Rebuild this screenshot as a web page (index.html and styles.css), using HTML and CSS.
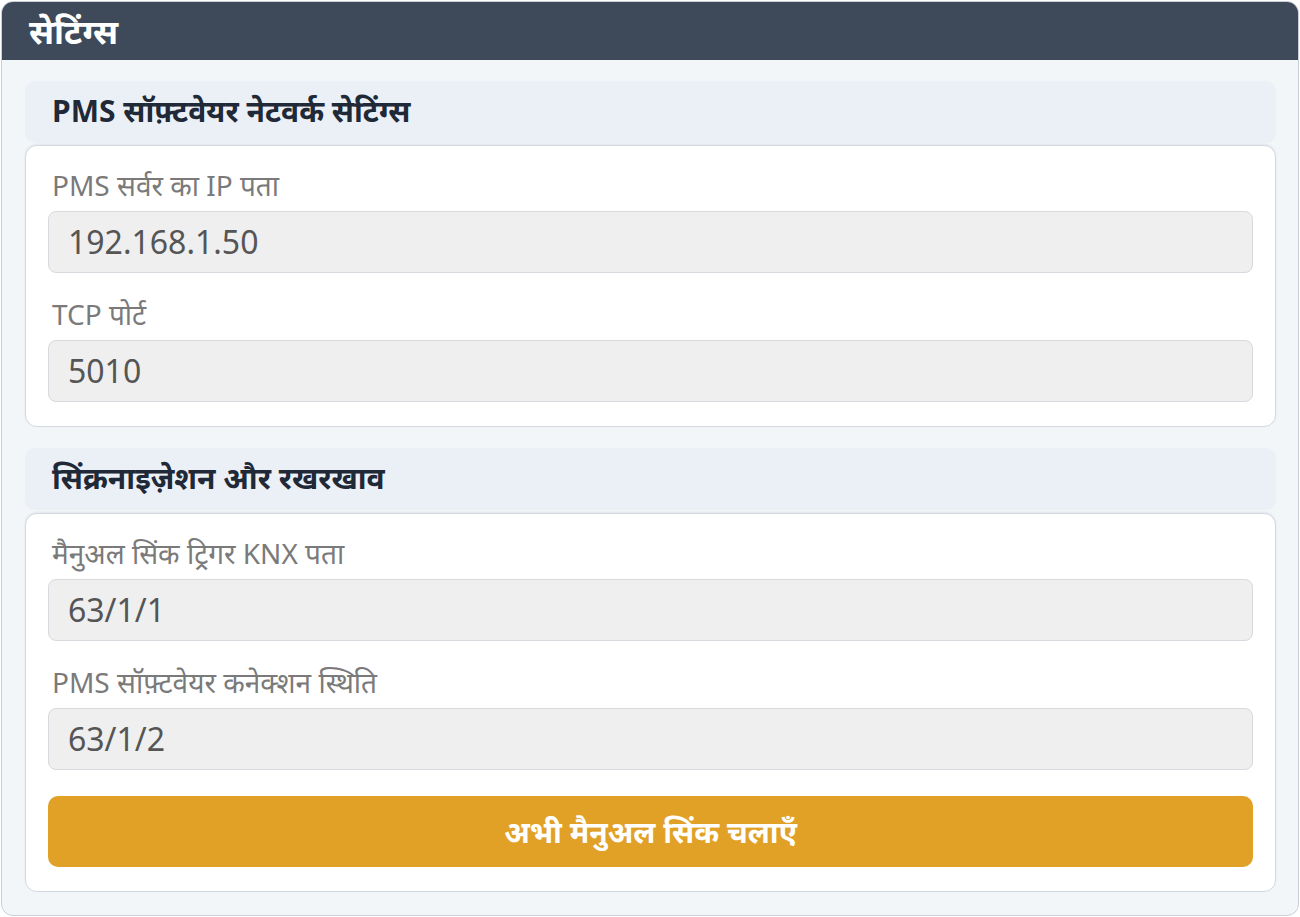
FILE: index.html
```html
<!DOCTYPE html>
<html lang="hi">
<head>
<meta charset="utf-8">
<title>सेटिंग्स</title>
<link rel="stylesheet" href="styles.css">
</head>
<body>
<div class="panel">
  <div class="panel-head">सेटिंग्स</div>
  <div class="panel-body">
    <div class="section-title">PMS सॉफ़्टवेयर नेटवर्क सेटिंग्स</div>
    <div class="card">
      <div class="field">
        <div class="label">PMS सर्वर का IP पता</div>
        <div class="input">192.168.1.50</div>
      </div>
      <div class="field">
        <div class="label">TCP पोर्ट</div>
        <div class="input">5010</div>
      </div>
    </div>
    <div class="section-title second">सिंक्रनाइज़ेशन और रखरखाव</div>
    <div class="card">
      <div class="field">
        <div class="label">मैनुअल सिंक ट्रिगर KNX पता</div>
        <div class="input">63/1/1</div>
      </div>
      <div class="field">
        <div class="label">PMS सॉफ़्टवेयर कनेक्शन स्थिति</div>
        <div class="input">63/1/2</div>
      </div>
      <button class="btn">अभी मैनुअल सिंक चलाएँ</button>
    </div>
  </div>
</div>
</body>
</html>
```
FILE: styles.css
```css
html, body {
  margin: 0;
  padding: 0;
  background: #ffffff;
}
body {
  padding: 1px;
  font-family: "Noto Sans", "Inter", sans-serif;
}
.panel {
  width: 1296px;
  border: 1px solid #c9d0da;
  border-radius: 12px;
  background: #f3f6f8;
  overflow: hidden;
}
.panel-head {
  height: 58px;
  background: #3e4a59;
  color: #ffffff;
  font-weight: 700;
  font-size: 34px;
  line-height: 58px;
  padding-left: 27px;
  overflow: hidden;
}
.panel-body {
  padding: 21px 22px 23px 23px;
  display: flex;
  flex-direction: column;
}
.section-title {
  height: 62px;
  box-sizing: border-box;
  background: #ebf0f6;
  border-radius: 10px;
  color: #1f2937;
  font-weight: 700;
  font-size: 30px;
  line-height: 60px;
  padding-left: 27px;
  margin-bottom: 2px;
  overflow: hidden;
}
.section-title.second {
  margin-top: 21px;
  margin-bottom: 3px;
}
.card {
  background: #ffffff;
  border: 1px solid #d3d9e1;
  border-radius: 12px;
  padding: 20px 22px 24px 22px;
  display: flex;
  flex-direction: column;
  gap: 22px;
  box-shadow: 0 -1px 2px rgba(100, 116, 139, 0.12);
}
.field {
  display: flex;
  flex-direction: column;
}
.label {
  height: 38px;
  color: #7a7a7a;
  font-size: 28px;
  line-height: 38px;
  padding-left: 4px;
  margin-bottom: 7px;
  overflow: visible;
}
.input {
  height: 62px;
  box-sizing: border-box;
  background: #efefef;
  border: 1px solid #d6d9de;
  border-radius: 8px;
  color: #555555;
  font-size: 32px;
  line-height: 60px;
  padding-left: 19px;
  overflow: hidden;
}
.btn {
  margin-top: 4px;
  height: 71px;
  border: none;
  border-radius: 10px;
  background: #e1a126;
  color: #ffffff;
  font-family: "Noto Sans", "Inter", sans-serif;
  font-weight: 700;
  font-size: 30px;
  cursor: pointer;
}
```
